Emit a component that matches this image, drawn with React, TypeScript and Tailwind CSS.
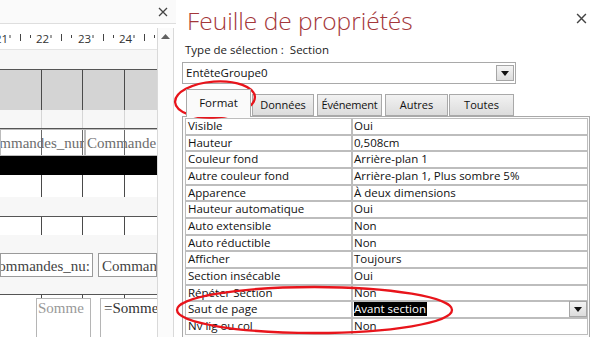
import React from "react";

const rows: [string, string][] = [
  ["Visible", "Oui"],
  ["Hauteur", "0,508cm"],
  ["Couleur fond", "Arrière-plan 1"],
  ["Autre couleur fond", "Arrière-plan 1, Plus sombre 5%"],
  ["Apparence", "À deux dimensions"],
  ["Hauteur automatique", "Oui"],
  ["Auto extensible", "Non"],
  ["Auto réductible", "Non"],
  ["Afficher", "Toujours"],
  ["Section insécable", "Oui"],
  ["Répéter Section", "Non"],
  ["Saut de page", "Avant section"],
  ["Nv lig ou col", "Non"],
];

function CloseX({ size = 10 }: { size?: number }) {
  return (
    <svg width={size} height={size} viewBox="0 0 10 10">
      <path d="M1 1 L9 9 M9 1 L1 9" stroke="#444" strokeWidth="1.3" />
    </svg>
  );
}

function DropBtn() {
  return (
    <div className="w-[18px] h-[16px] border border-[#a6a6a6] bg-gradient-to-b from-[#f4f4f4] to-[#dcdcdc] flex items-center justify-center">
      <svg width="8" height="5" viewBox="0 0 8 5">
        <path d="M0 0 L8 0 L4 5 Z" fill="#111" />
      </svg>
    </div>
  );
}

function Cells({ h, bg, lines, children }: { h: string; bg: string; lines: string; children?: React.ReactNode }) {
  return (
    <div className={`relative flex ${h} ${bg}`}>
      <div className={`w-[42px] border-r ${lines}`} />
      <div className={`w-[41px] border-r ${lines}`} />
      <div className={`w-[42px] border-r ${lines}`} />
      <div className="flex-1" />
      {children}
    </div>
  );
}

function LeftPane() {
  const serif = { fontFamily: '"Liberation Serif", "DejaVu Serif", serif' };
  return (
    <div className="w-[176px] h-full flex flex-col bg-white">
      <div className="h-[24px] bg-[#fafafa] border-b border-[#dedede] flex items-center justify-end pr-[8px] shrink-0">
        <CloseX />
      </div>
      <div className="h-[4px] shrink-0" />
      <div className="flex flex-1 min-h-0">
        <div className="w-[157px] flex flex-col overflow-hidden bg-[#f7f7f7]">
          <div className="h-[22px] bg-white border-b border-[#e4e4e4] shrink-0">
            <svg width="157" height="22" viewBox="0 0 157 22" style={{ fontFamily: '"Open Sans", sans-serif' }}>
              {[
                { n: "21", x: -5 },
                { n: "22", x: 36 },
                { n: "23", x: 78 },
                { n: "24", x: 119 },
              ].map((t) => (
                <g key={t.n}>
                  <text x={t.x} y={14.5} fontSize="11.5" fill="#333">{t.n}</text>
                  <line x1={t.x + 15} y1={7} x2={t.x + 15} y2={10} stroke="#444" strokeWidth="1" />
                  <line x1={t.x + 25.5} y1={6} x2={t.x + 25.5} y2={13} stroke="#444" strokeWidth="1" />
                  <line x1={t.x + 35.5} y1={7} x2={t.x + 35.5} y2={10} stroke="#444" strokeWidth="1" />
                </g>
              ))}
            </svg>
          </div>
          <div className="h-[19px] shrink-0" />
          <div className="border-t border-[#555] shrink-0" />
          <Cells h="h-[40px] shrink-0" bg="bg-[#d4d4d4]" lines="border-[#4a4a4a]" />
          <Cells h="h-[18px] shrink-0" bg="bg-[#f7f7f7]" lines="border-[#d6d6d6]" />
          <div className="border-t border-[#555] shrink-0" />
          <Cells h="h-[27px] shrink-0 overflow-hidden" bg="bg-white" lines="border-[#6a6a6a]">
            <div className="absolute left-0 top-0 h-full w-[86px] border border-[#bbb] overflow-hidden">
              <span className="absolute right-[-6px] top-[2px] text-[15px] text-[#6d6d6d] whitespace-nowrap" style={serif}>Commandes_num</span>
            </div>
            <div className="absolute left-[84px] top-0 h-full w-[80px] border border-[#bbb] overflow-hidden">
              <span className="absolute left-[2px] top-[2px] text-[15px] text-[#6d6d6d] whitespace-nowrap" style={serif}>Commande</span>
            </div>
          </Cells>
          <div className="h-[19px] bg-black shrink-0" />
          <Cells h="h-[22px] shrink-0" bg="bg-white" lines="border-[#4a4a4a]" />
          <div className="h-[19px] shrink-0" />
          <div className="border-t border-[#555] shrink-0" />
          <Cells h="h-[18px] shrink-0" bg="bg-white" lines="border-[#4a4a4a]" />
          <div className="h-[18px] shrink-0" />
          <div className="h-[24px] flex gap-[5px] shrink-0">
            <div className="relative w-[93px] h-full bg-white border border-[#9a9a9a] overflow-hidden">
              <span className="absolute right-[2px] top-[1px] text-[15px] text-[#444] whitespace-nowrap" style={serif}>Commandes_nu:</span>
            </div>
            <div className="relative flex-1 h-full bg-white border border-[#9a9a9a] overflow-hidden">
              <span className="absolute left-[3px] top-[1px] text-[15px] text-[#444] whitespace-nowrap" style={serif}>Commande</span>
            </div>
          </div>
          <div className="h-[17px] shrink-0" />
          <div className="border-t border-[#555] shrink-0" />
          <Cells h="flex-1" bg="bg-white" lines="border-[#4a4a4a]">
            <div className="absolute left-[36px] top-[3px] w-[55px] h-[60px] border border-[#b5b5b5] bg-white overflow-hidden">
              <span className="absolute left-[1px] top-[-2px] text-[15px] text-[#999] whitespace-nowrap" style={serif}>Somme</span>
            </div>
            <div className="absolute left-[100px] top-[3px] w-[60px] h-[60px] border border-[#b5b5b5] bg-white overflow-hidden">
              <span className="absolute left-[3px] top-[-2px] text-[15px] text-[#333] whitespace-nowrap" style={serif}>=Somme</span>
            </div>
          </Cells>
        </div>
        <div className="w-[17px] bg-[#fbfbfb] border-l border-r border-[#d9d9d9] flex flex-col">
          <div className="h-[16px] flex items-center justify-center">
            <svg width="9" height="5" viewBox="0 0 9 5">
              <path d="M0 5 L9 5 L4.5 0 Z" fill="#606060" />
            </svg>
          </div>
        </div>
      </div>
    </div>
  );
}

function RightPane() {
  return (
    <div className="flex-1 h-full flex flex-col bg-white" style={{ fontFamily: '"Open Sans", "Noto Sans", sans-serif' }}>
      <div className="h-[43px] flex items-start shrink-0">
        <div className="pl-[11px] pt-[4px] text-[24.5px] font-light leading-[34px] text-[#a4373a] whitespace-nowrap">Feuille de propriétés</div>
        <div className="ml-auto mr-[13px] mt-[13px]">
          <CloseX size={11} />
        </div>
      </div>
      <div className="pl-[9px] text-[11.5px] leading-[14px] text-[#222] h-[19px] shrink-0">Type de sélection :&nbsp; Section</div>
      <div className="ml-[6px] w-[334px] h-[22px] border border-[#a9a9a9] flex items-center pl-[3px] pr-[1px] text-[11.5px] text-[#111] shrink-0">
        <span>EntêteGroupe0</span>
        <div className="ml-auto">
          <DropBtn />
        </div>
      </div>
      <div className="h-[5px] shrink-0" />
      <div className="flex items-end ml-[10px] h-[27px] text-[11px] text-[#111] shrink-0">
        <div className="relative z-10 w-[65px] h-[28px] -mb-px bg-[#fafafa] border-l border-t border-r border-[#a9a9a9] flex items-center justify-center pb-[2px] text-[11.5px]">Format</div>
        <div className="ml-[1px] w-[62px] h-[22px] bg-gradient-to-b from-[#f2f2f2] to-[#dcdcdc] border border-[#a9a9a9] flex items-center justify-center">Données</div>
        <div className="ml-[3px] w-[65px] h-[22px] bg-gradient-to-b from-[#f2f2f2] to-[#dcdcdc] border border-[#a9a9a9] flex items-center justify-center tracking-[-0.2px]">Événement</div>
        <div className="ml-[3px] w-[63px] h-[22px] bg-gradient-to-b from-[#f2f2f2] to-[#dcdcdc] border border-[#a9a9a9] flex items-center justify-center">Autres</div>
        <div className="ml-[1px] w-[65px] h-[22px] bg-gradient-to-b from-[#f2f2f2] to-[#dcdcdc] border border-[#a9a9a9] flex items-center justify-center">Toutes</div>
      </div>
      <div className="ml-[6px] w-[408px] flex-1 border-l border-t border-r border-[#a9a9a9] bg-[#fcfcfc] pl-[2px] pr-[1px] pt-[1px] text-[11.5px] text-[#111]">
        {rows.map(([k, v], i) => (
          <div key={k} className="flex h-[16.67px] leading-[14px]">
            <div className="w-[167px] border border-[#bdbdbd] bg-white pl-[2px] whitespace-nowrap overflow-hidden">{k}</div>
            <div className="flex-1 border border-[#bdbdbd] bg-white pl-[1px] flex items-start">
              {i === 11 ? (
                <>
                  <span className="bg-black text-white pr-[1px]">{v}</span>
                  <div className="ml-auto mt-[-1px]">
                    <DropBtn />
                  </div>
                </>
              ) : (
                <span>{v}</span>
              )}
            </div>
          </div>
        ))}
      </div>
    </div>
  );
}

export default function App() {
  return (
    <div className="relative w-[600px] h-[337px] overflow-hidden flex bg-white">
      <LeftPane />
      <RightPane />
      <svg className="absolute left-0 top-0 pointer-events-none" width="600" height="337" viewBox="0 0 600 337">
        <ellipse cx="215" cy="99.5" rx="40" ry="18" fill="none" stroke="#e8141b" strokeWidth="2.3" transform="rotate(-4 215 99.5)" />
        <ellipse cx="314.5" cy="310" rx="137.5" ry="23" fill="none" stroke="#e8141b" strokeWidth="2.3" />
      </svg>
    </div>
  );
}
